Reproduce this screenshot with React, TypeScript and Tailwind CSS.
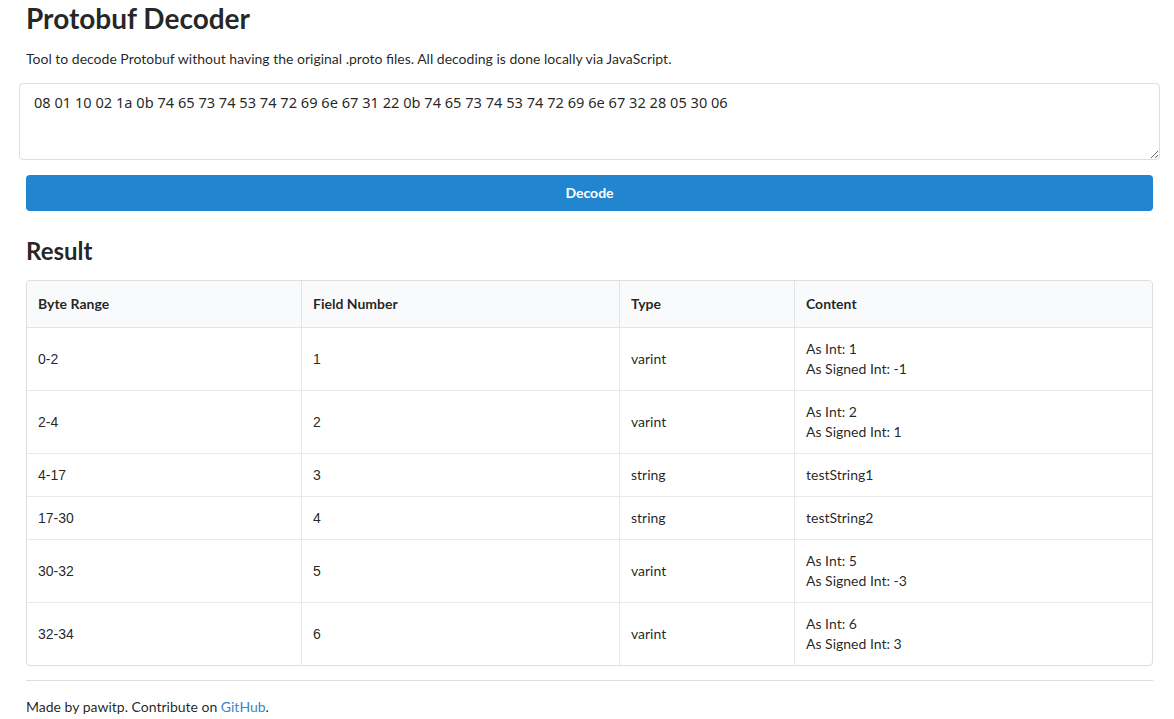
import React from 'react';

const rows = [
  { range: '0-2', field: '1', type: 'varint', content: ['As Int: 1', 'As Signed Int: -1'] },
  { range: '2-4', field: '2', type: 'varint', content: ['As Int: 2', 'As Signed Int: 1'] },
  { range: '4-17', field: '3', type: 'string', content: ['testString1'] },
  { range: '17-30', field: '4', type: 'string', content: ['testString2'] },
  { range: '30-32', field: '5', type: 'varint', content: ['As Int: 5', 'As Signed Int: -3'] },
  { range: '32-34', field: '6', type: 'varint', content: ['As Int: 6', 'As Signed Int: 3'] },
];

const grid = 'grid grid-cols-[274px_318px_175px_1fr]';
const hex =
  '08 01 10 02 1a 0b 74 65 73 74 53 74 72 69 6e 67 31 22 0b 74 65 73 74 53 74 72 69 6e 67 32 28 05 30 06';

export default function App() {
  return (
    <div className="min-h-[719px] bg-white font-['Lato',sans-serif] text-[14px] leading-[20px] text-[rgba(0,0,0,0.87)]">
      <div className="ml-[26px] w-[1127px]">
        <h1 className="mb-[13px] text-[28px] font-bold leading-[36px]">Protobuf Decoder</h1>
        <p className="mb-[14px]">
          Tool to decode Protobuf without having the original .proto files. All decoding is done locally via JavaScript.
        </p>

        <textarea
          defaultValue={hex}
          className="-mx-[7px] block h-[77px] w-[1141px] rounded-[4px] border border-[rgba(34,36,38,0.15)] px-[14px] pt-[8px] pb-[10px] font-['Noto_Sans',sans-serif] text-[14.6px] leading-[20px] text-[rgba(0,0,0,0.87)] outline-none"
        />

        <button className="mt-[15px] block h-[36px] w-full rounded-[4px] bg-[#2185d0] text-[14px] font-bold text-white">
          Decode
        </button>

        <h2 className="mt-[24px] mb-[14px] text-[24px] font-bold leading-[31px]">Result</h2>

        <div className="overflow-hidden rounded-[4px] border border-[rgba(34,36,38,0.15)]">
          <div className={`${grid} border-b border-[rgba(34,36,38,0.1)] bg-[#f9fafb] font-bold`}>
            <div className="px-[11px] py-[13px]">Byte Range</div>
            <div className="border-l border-[rgba(34,36,38,0.1)] px-[11px] py-[13px]">Field Number</div>
            <div className="border-l border-[rgba(34,36,38,0.1)] px-[11px] py-[13px]">Type</div>
            <div className="border-l border-[rgba(34,36,38,0.1)] px-[11px] py-[13px]">Content</div>
          </div>
          {rows.map((r, i) => (
            <div
              key={r.range}
              className={`${grid} ${i < rows.length - 1 ? 'border-b border-[rgba(34,36,38,0.1)]' : ''}`}
            >
              <div className="flex items-center px-[11px] py-[11px] font-['Liberation_Sans',sans-serif]">{r.range}</div>
              <div className="flex items-center border-l border-[rgba(34,36,38,0.1)] px-[11px] py-[11px] font-['Liberation_Sans',sans-serif]">
                {r.field}
              </div>
              <div className="flex items-center border-l border-[rgba(34,36,38,0.1)] px-[11px] py-[11px]">{r.type}</div>
              <div className="flex flex-col justify-center border-l border-[rgba(34,36,38,0.1)] px-[11px] py-[11px]">
                {r.content.map((c) => (
                  <div key={c}>{c}</div>
                ))}
              </div>
            </div>
          ))}
        </div>

        <div className="mt-[14px] border-t border-b border-t-[rgba(34,36,38,0.15)] border-b-[rgba(255,255,255,0.1)]" />

        <p className="mt-[15px]">
          Made by pawitp. Contribute on <a className="text-[#4183c4]" href="#">GitHub</a>.
        </p>
      </div>
    </div>
  );
}
